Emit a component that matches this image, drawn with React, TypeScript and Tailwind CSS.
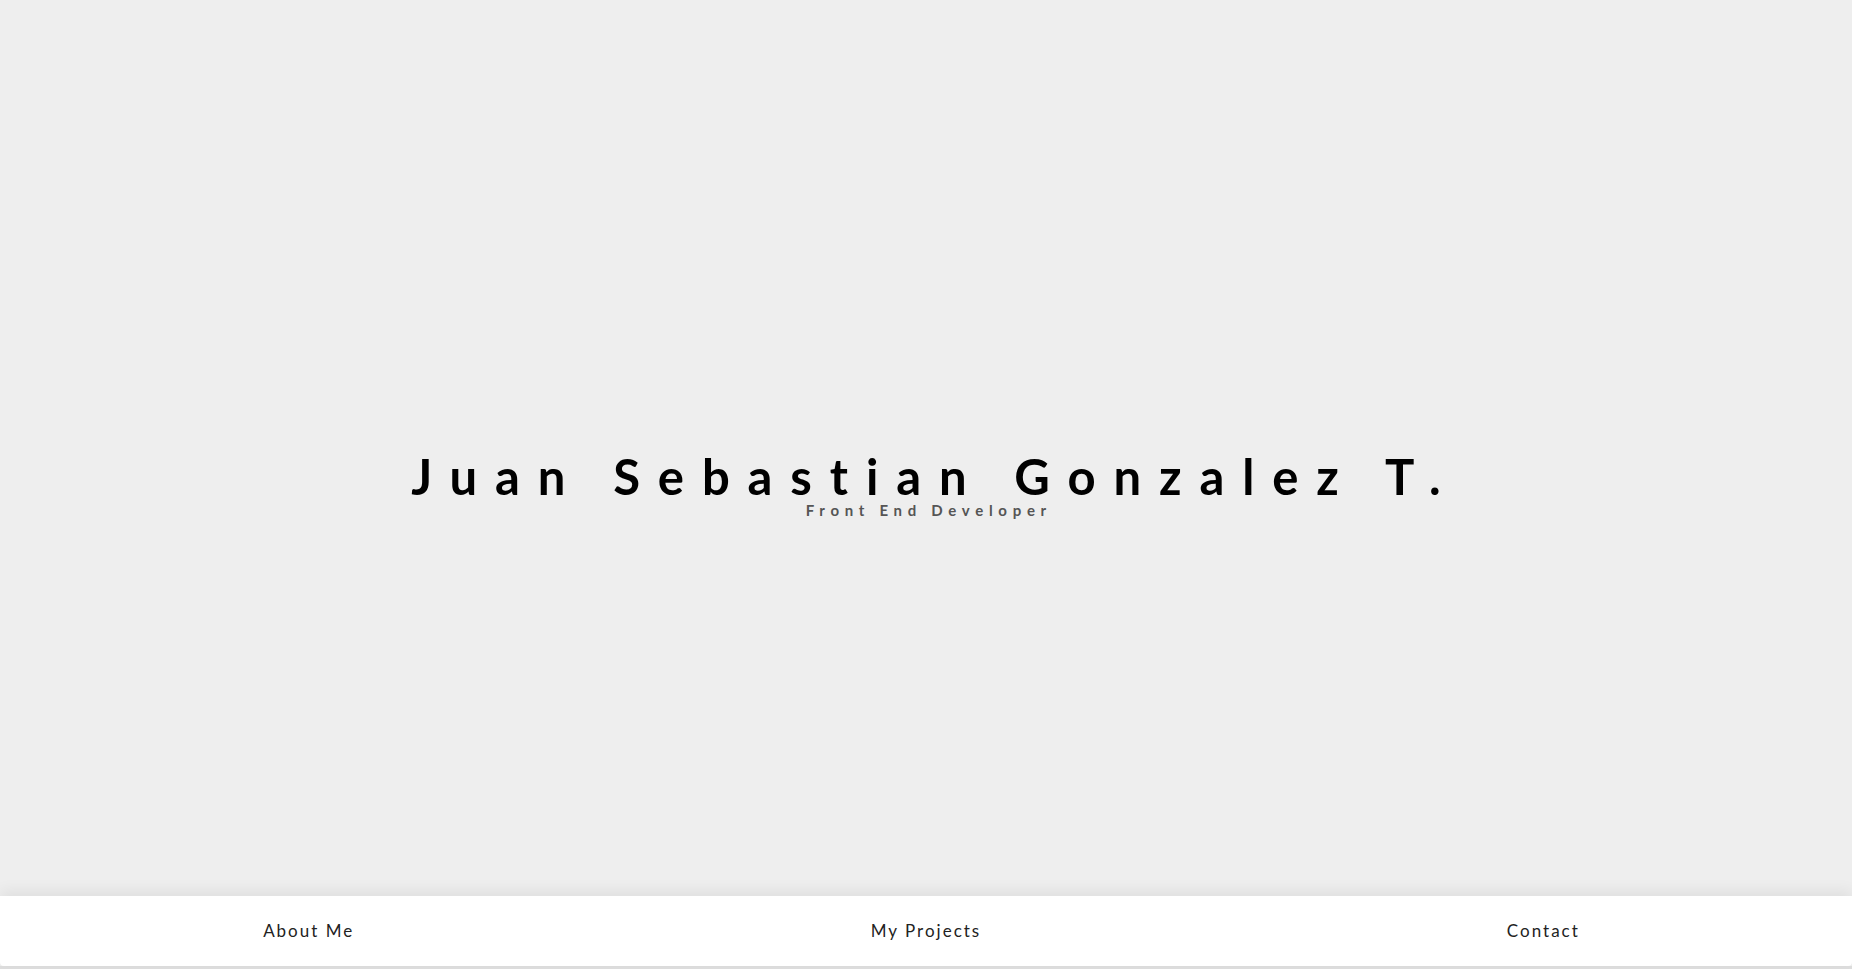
export default function App() {
  const links = ['About Me', 'My Projects', 'Contact']

  return (
    <div className="relative h-[969px] w-full overflow-hidden bg-[#eeeeee] font-['Lato',_'Liberation_Sans',_sans-serif]">
      <section className="flex h-full flex-col items-center justify-center">
        <h1 className="pl-[0.365em] text-[49px] font-bold leading-[48px] tracking-[0.365em] text-black">
          Juan Sebastian Gonzalez T.
        </h1>
        <p className="mt-0.5 pl-[0.38em] text-[15px] font-bold leading-4 tracking-[0.38em] text-[#555555]">
          Front End Developer
        </p>
      </section>

      <nav className="absolute inset-x-0 bottom-0 border-b-[3px] border-[#dddddd]">
        <ul className="grid h-[70px] grid-cols-3 rounded-b bg-white shadow-[0_-6px_14px_rgba(0,0,0,0.06)]">
          {links.map((link) => (
            <li key={link} className="flex items-center justify-center">
              <a href="#" className="text-[17px] tracking-[2px] text-[#222222]">
                {link}
              </a>
            </li>
          ))}
        </ul>
      </nav>
    </div>
  )
}
